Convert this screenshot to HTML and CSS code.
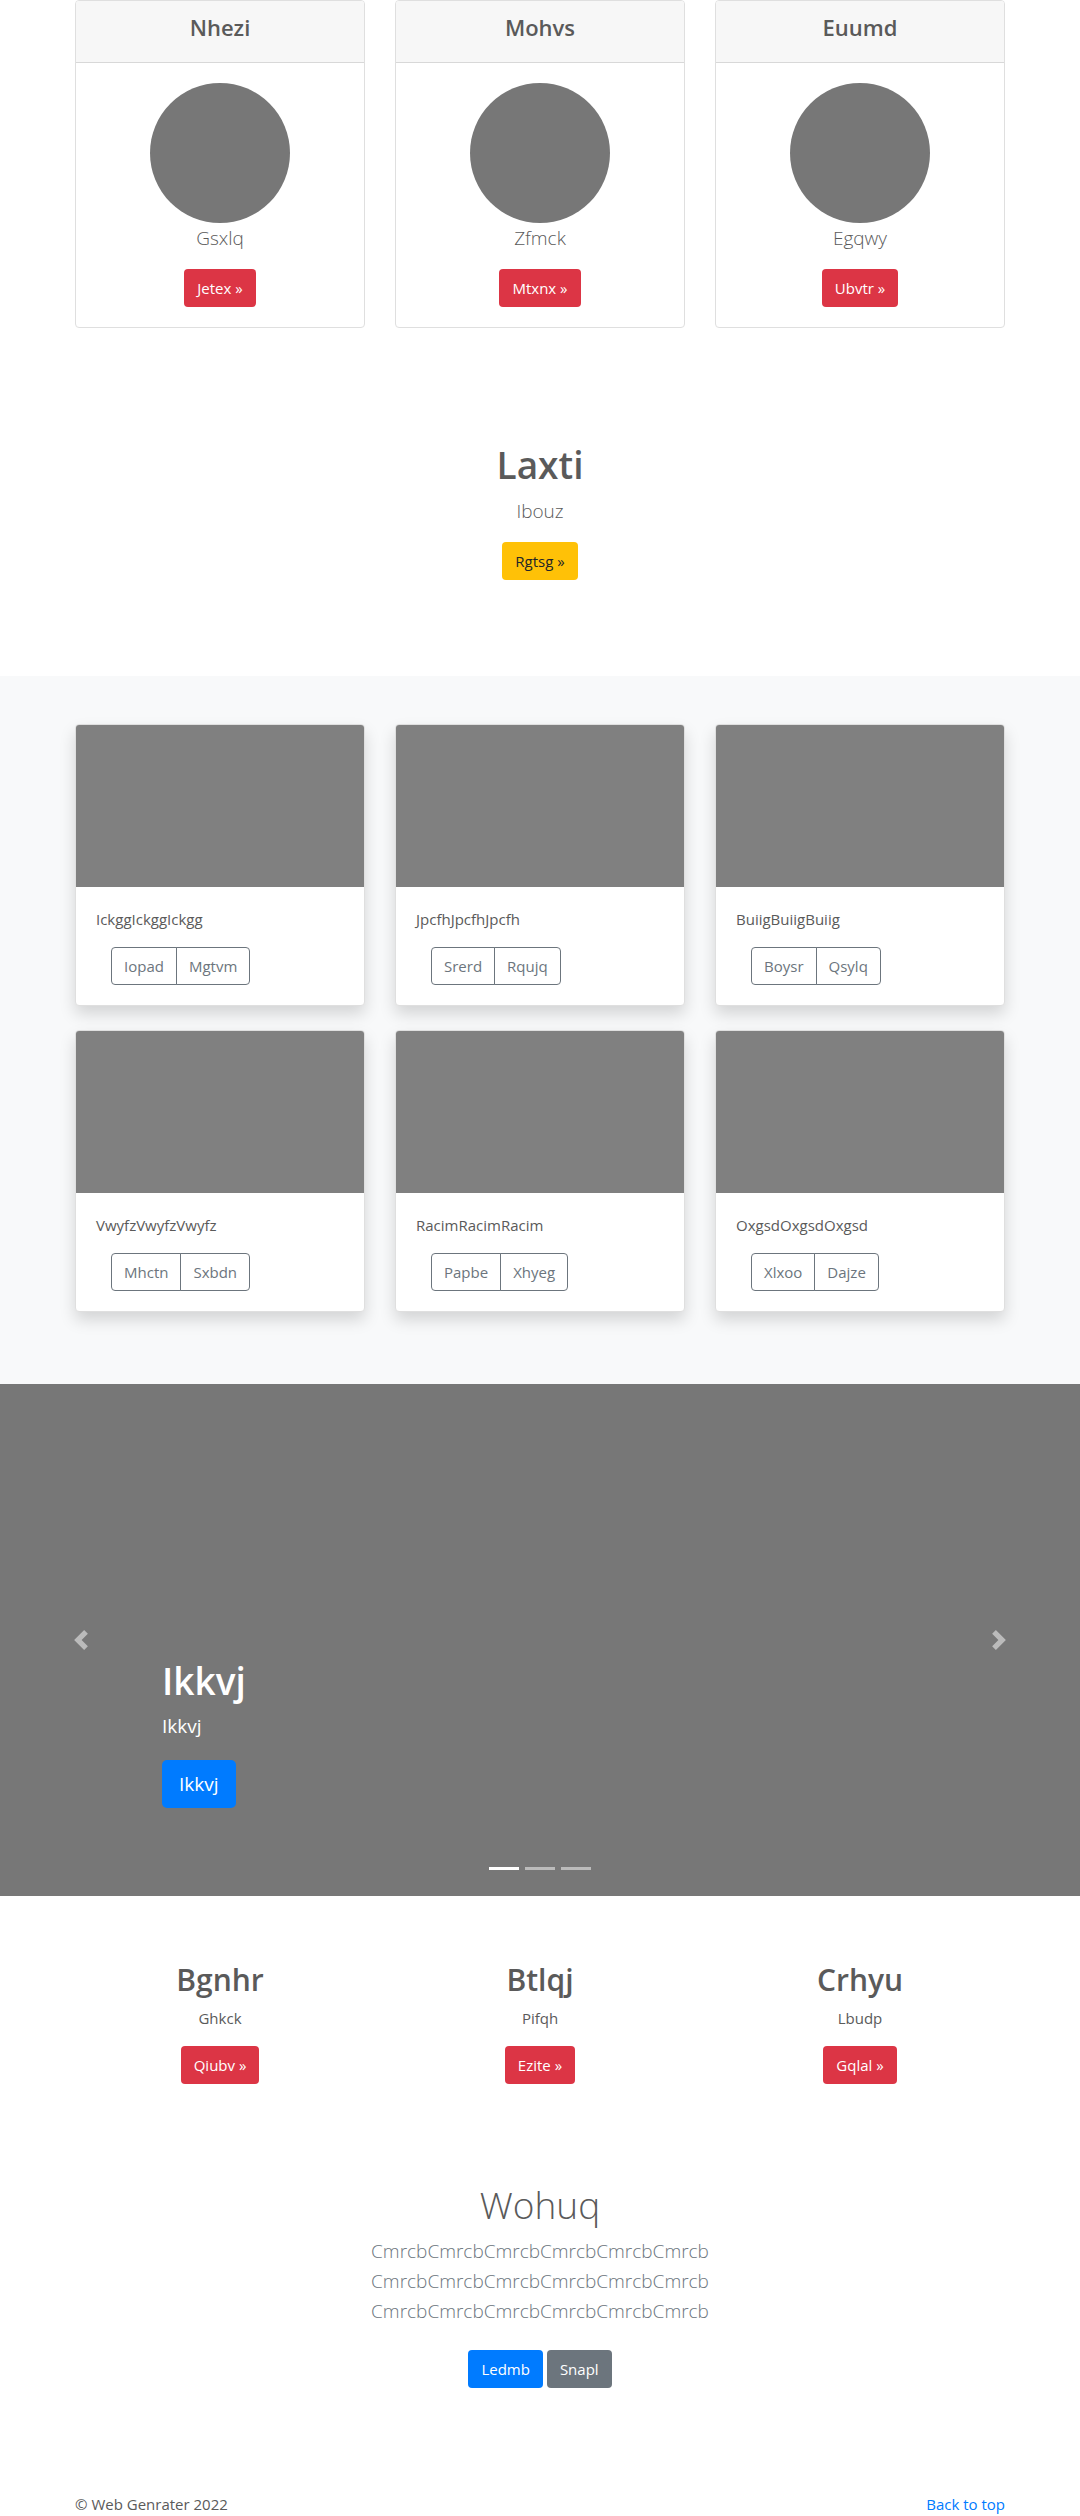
FILE: index.html
```html
<!DOCTYPE html>
<html lang="en">
<head>
<meta charset="utf-8">
<meta name="viewport" content="width=device-width, initial-scale=1">
<title>Web Genrater</title>
<link rel="stylesheet" href="styles.css">
</head>
<body>
<main>
  <section class="container grid plans">
    <article class="card plan">
      <header class="card-header"><h4>Nhezi</h4></header>
      <div class="card-body">
        <div class="avatar"></div>
        <p class="lead">Gsxlq</p>
        <a class="btn btn-danger" href="#">Jetex »</a>
      </div>
    </article>
    <article class="card plan">
      <header class="card-header"><h4>Mohvs</h4></header>
      <div class="card-body">
        <div class="avatar"></div>
        <p class="lead">Zfmck</p>
        <a class="btn btn-danger" href="#">Mtxnx »</a>
      </div>
    </article>
    <article class="card plan">
      <header class="card-header"><h4>Euumd</h4></header>
      <div class="card-body">
        <div class="avatar"></div>
        <p class="lead">Egqwy</p>
        <a class="btn btn-danger" href="#">Ubvtr »</a>
      </div>
    </article>
  </section>

  <section class="container intro">
    <h1>Laxti</h1>
    <p class="lead">Ibouz</p>
    <a class="btn btn-warning" href="#">Rgtsg »</a>
  </section>

  <section class="album">
    <div class="container grid album-grid">
      <article class="card shadow">
        <div class="thumb"></div>
        <div class="card-body">
          <p>IckggIckggIckgg</p>
          <div class="btn-group"><button class="btn btn-outline" type="button">Iopad</button><button class="btn btn-outline" type="button">Mgtvm</button></div>
        </div>
      </article>
      <article class="card shadow">
        <div class="thumb"></div>
        <div class="card-body">
          <p>JpcfhJpcfhJpcfh</p>
          <div class="btn-group"><button class="btn btn-outline" type="button">Srerd</button><button class="btn btn-outline" type="button">Rqujq</button></div>
        </div>
      </article>
      <article class="card shadow">
        <div class="thumb"></div>
        <div class="card-body">
          <p>BuiigBuiigBuiig</p>
          <div class="btn-group"><button class="btn btn-outline" type="button">Boysr</button><button class="btn btn-outline" type="button">Qsylq</button></div>
        </div>
      </article>
      <article class="card shadow">
        <div class="thumb"></div>
        <div class="card-body">
          <p>VwyfzVwyfzVwyfz</p>
          <div class="btn-group"><button class="btn btn-outline" type="button">Mhctn</button><button class="btn btn-outline" type="button">Sxbdn</button></div>
        </div>
      </article>
      <article class="card shadow">
        <div class="thumb"></div>
        <div class="card-body">
          <p>RacimRacimRacim</p>
          <div class="btn-group"><button class="btn btn-outline" type="button">Papbe</button><button class="btn btn-outline" type="button">Xhyeg</button></div>
        </div>
      </article>
      <article class="card shadow">
        <div class="thumb"></div>
        <div class="card-body">
          <p>OxgsdOxgsdOxgsd</p>
          <div class="btn-group"><button class="btn btn-outline" type="button">Xlxoo</button><button class="btn btn-outline" type="button">Dajze</button></div>
        </div>
      </article>
    </div>
  </section>

  <section class="carousel">
    <button class="carousel-control" type="button" aria-label="Previous">
      <svg width="20" height="20" viewBox="0 0 8 8" fill="#fff" aria-hidden="true"><path d="M5.25 0l-4 4 4 4 1.5-1.5L4.25 4l2.5-2.5L5.25 0z"/></svg>
    </button>
    <div class="carousel-caption">
      <h1>Ikkvj</h1>
      <p>Ikkvj</p>
      <a class="btn btn-lg btn-primary" href="#">Ikkvj</a>
    </div>
    <button class="carousel-control" type="button" aria-label="Next">
      <svg width="20" height="20" viewBox="0 0 8 8" fill="#fff" aria-hidden="true"><path d="M2.75 0l-1.5 1.5L3.75 4l-2.5 2.5L2.75 8l4-4-4-4z"/></svg>
    </button>
    <div class="carousel-indicators">
      <button class="active" type="button" aria-label="Slide 1"></button>
      <button type="button" aria-label="Slide 2"></button>
      <button type="button" aria-label="Slide 3"></button>
    </div>
  </section>

  <section class="container grid marketing">
    <div class="feature">
      <h2>Bgnhr</h2>
      <p>Ghkck</p>
      <a class="btn btn-danger" href="#">Qiubv »</a>
    </div>
    <div class="feature">
      <h2>Btlqj</h2>
      <p>Pifqh</p>
      <a class="btn btn-danger" href="#">Ezite »</a>
    </div>
    <div class="feature">
      <h2>Crhyu</h2>
      <p>Lbudp</p>
      <a class="btn btn-danger" href="#">Gqlal »</a>
    </div>
  </section>

  <section class="container closing">
    <h1>Wohuq</h1>
    <p class="lead muted">CmrcbCmrcbCmrcbCmrcbCmrcbCmrcb<br>CmrcbCmrcbCmrcbCmrcbCmrcbCmrcb<br>CmrcbCmrcbCmrcbCmrcbCmrcbCmrcb</p>
    <div class="actions">
      <a class="btn btn-primary" href="#">Ledmb</a>
      <a class="btn btn-secondary" href="#">Snapl</a>
    </div>
  </section>
</main>

<footer class="container footer">
  <span>© Web Genrater 2022</span>
  <a href="#">Back to top</a>
</footer>
</body>
</html>
```
FILE: styles.css
```css
*,
*::before,
*::after {
  box-sizing: border-box;
}

body {
  margin: 0;
  background: #fff;
  color: #5a5a5a;
  font-family: "Segoe UI", "Open Sans", "Noto Sans", sans-serif;
  font-size: 15px;
  line-height: 24px;
}

h1,
h2,
h4 {
  margin: 0 0 8px;
  font-weight: 600;
}

h1 {
  font-size: 37px;
  line-height: 50px;
  margin-bottom: 6px;
}

h2 {
  font-size: 30px;
  line-height: 40px;
  margin-bottom: 6px;
}

h4 {
  font-size: 22px;
  line-height: 29px;
}

p {
  margin: 0 0 16px;
}

a {
  color: #007bff;
  text-decoration: none;
}

.lead {
  font-size: 19px;
  font-weight: 300;
  line-height: 30px;
}

.muted {
  color: #6c757d;
}

.container {
  width: 100%;
  max-width: 960px;
  margin: 0 auto;
  padding: 0 15px;
}

.grid {
  display: grid;
  grid-template-columns: repeat(3, 1fr);
  column-gap: 30px;
}

/* Buttons */

.btn {
  display: inline-block;
  padding: 6px 12px;
  border: 1px solid transparent;
  border-radius: 4px;
  background: transparent;
  color: #fff;
  font: inherit;
  text-align: center;
  vertical-align: top;
  cursor: pointer;
}

.btn-lg {
  padding: 8px 16px;
  border-radius: 5px;
  font-size: 19px;
  line-height: 30px;
}

.btn-primary {
  background: #007bff;
}

.btn-secondary {
  background: #6c757d;
}

.btn-danger {
  background: #dc3545;
}

.btn-warning {
  background: #ffc107;
  color: #212529;
}

.btn-outline {
  border-color: #6c757d;
  color: #6c757d;
}

.btn-group {
  display: flex;
  margin-left: 15px;
}

.btn-group .btn:first-child {
  border-top-right-radius: 0;
  border-bottom-right-radius: 0;
}

.btn-group .btn:last-child {
  margin-left: -1px;
  border-top-left-radius: 0;
  border-bottom-left-radius: 0;
}

/* Cards */

.card {
  border: 1px solid #dfdfdf;
  border-radius: 4px;
  background: #fff;
  overflow: hidden;
}

.card-header {
  padding: 12px 20px;
  border-bottom: 1px solid #d8d8d8;
  background: #f7f7f7;
}

.card-body {
  padding: 20px;
}

.plan {
  text-align: center;
}

.avatar {
  width: 140px;
  height: 140px;
  margin: 0 auto;
  border-radius: 50%;
  background: #777;
}

.shadow {
  box-shadow: 0 8px 16px rgba(0, 0, 0, 0.15);
}

.thumb {
  height: 162px;
  background: #808080;
}

/* Sections */

.plans {
  margin-bottom: 16px;
}

.intro {
  padding-top: 96px;
  padding-bottom: 96px;
  text-align: center;
}

.album {
  padding: 48px 0 72px;
  background: #f8f9fa;
}

.album-grid {
  row-gap: 24px;
}

.carousel {
  position: relative;
  display: grid;
  grid-template-columns: 15% 1fr 15%;
  min-height: 512px;
  background: #777;
  color: #fff;
}

.carousel-control {
  display: flex;
  align-items: center;
  justify-content: center;
  padding: 0;
  border: 0;
  background: transparent;
  opacity: 0.5;
  cursor: pointer;
}

.carousel-caption {
  align-self: end;
  padding-bottom: 88px;
}

.carousel-caption p {
  margin-bottom: 20px;
  font-size: 19px;
  line-height: 28px;
}

.carousel-indicators {
  position: absolute;
  right: 0;
  bottom: 26px;
  left: 0;
  display: flex;
  justify-content: center;
  gap: 6px;
}

.carousel-indicators button {
  width: 30px;
  height: 3px;
  padding: 0;
  border: 0;
  background: #fff;
  opacity: 0.5;
}

.carousel-indicators .active {
  opacity: 1;
}

.marketing {
  padding-top: 64px;
}

.feature {
  text-align: center;
}

.closing {
  padding-top: 96px;
  padding-bottom: 104px;
  text-align: center;
}

.closing h1 {
  font-weight: 300;
}

.closing .lead {
  margin-bottom: 24px;
}

.actions {
  display: flex;
  justify-content: center;
  gap: 4px;
}

.footer {
  display: flex;
  justify-content: space-between;
}

@media (max-width: 767px) {
  .grid {
    grid-template-columns: 1fr;
    row-gap: 24px;
  }
}
```
